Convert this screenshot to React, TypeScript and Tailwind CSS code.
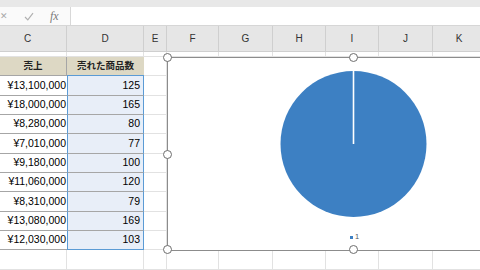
import React from "react";

const cols = [78, 77, 23, 52, 54, 53, 53, 54, 53];
const letters = ["C", "D", "E", "F", "G", "H", "I", "J", "K"];
const data: [string, string][] = [
  ["¥13,100,000", "125"],
  ["¥18,000,000", "165"],
  ["¥8,280,000", "80"],
  ["¥7,010,000", "77"],
  ["¥9,180,000", "100"],
  ["¥11,060,000", "120"],
  ["¥8,310,000", "79"],
  ["¥13,080,000", "169"],
  ["¥12,030,000", "103"],
];

const gridTpl = "grid grid-cols-[78px_77px_23px_52px_54px_53px_53px_54px_53px]";

function Handle({ cls }: { cls: string }) {
  return (
    <div
      className={`absolute w-[9px] h-[9px] rounded-full bg-white border-[1.5px] border-[#6e6e6e] ${cls}`}
    />
  );
}

export default function App() {
  return (
    <div
      className="relative w-[480px] h-[270px] overflow-hidden bg-white text-black"
      style={{ fontFamily: '"Liberation Sans", "Noto Sans CJK JP", sans-serif' }}
    >
      {/* formula bar */}
      <div className="h-[7px] bg-[#e8e8e8]" />
      <div className="h-[19px] flex bg-white border-b border-[#d6d6d6]">
        <div className="w-[70px] relative bg-[#fafafa] text-[#a8a8a8]">
          <span className="absolute left-[0px] top-[3px] text-[9px] leading-[12px]">✕</span>
          <svg className="absolute left-[24px] top-[5px]" width="10" height="9" viewBox="0 0 10 9">
            <path d="M1 5 L3.8 7.8 L9 1.2" fill="none" stroke="#b0b0b0" strokeWidth="1.2" />
          </svg>
          <span
            className="absolute left-[50px] top-[1px] text-[12px] italic text-[#7a7a7a] leading-[16px]"
            style={{ fontFamily: '"Liberation Serif", serif' }}
          >
            fx
          </span>
        </div>
        <div className="flex-1 border-l border-[#d8d8d8] bg-white" />
      </div>

      {/* column headers */}
      <div className={`${gridTpl} -ml-[11px] h-[26px] bg-[#e6e6e6] border-b border-[#cfcfcf]`}>
        {letters.map((l) => (
          <div
            key={l}
            className="border-r border-[#cfcfcf] flex items-center justify-center text-[10px] text-[#333]"
          >
            {l}
          </div>
        ))}
      </div>

      {/* body */}
      <div className="-ml-[11px]">
        <div className={`${gridTpl} h-[5px]`}>
          {cols.map((_, i) => (
            <div key={i} className="border-r border-b border-[#e2e2e2]" />
          ))}
        </div>
        <div className={`${gridTpl} h-[19.4px]`}>
          <div className="bg-[#ddd8c4] border-r border-[#a6a6a6] border-b border-b-[#a6a6a6] flex items-center justify-center text-[9.5px] font-bold text-[#222]">
            <span className="pl-[11px]">売上</span>
          </div>
          <div className="bg-[#ddd8c4] border-b border-b-[#5b9bd5] flex items-center justify-center text-[9.5px] font-bold text-[#222]">
            売れた商品数
          </div>
          {cols.slice(2).map((_, i) => (
            <div key={i} className="border-r border-b border-[#e2e2e2]" />
          ))}
        </div>
        {data.map(([a, b], r) => (
          <div key={r} className={`${gridTpl} h-[19.33px]`}>
            <div className="border-b border-[#a6a6a6] flex items-center justify-end pr-[1px] text-[10.5px]">
              {a}
            </div>
            <div
              className={`bg-[#e8eef8] border-l border-r border-[#5b9bd5] border-b ${
                r === data.length - 1 ? "border-b-[#5b9bd5]" : "border-b-[#a6a6a6]"
              } flex items-center justify-end pr-[3px] text-[10.5px]`}
            >
              {b}
            </div>
            {cols.slice(2).map((_, i) => (
              <div key={i} className="border-r border-b border-[#e2e2e2]" />
            ))}
          </div>
        ))}
        <div className={`${gridTpl} h-[19.33px]`}>
          {cols.map((_, i) => (
            <div key={i} className="border-r border-b border-[#e2e2e2]" />
          ))}
        </div>
      </div>

      {/* chart overlay */}
      <div className="absolute left-[167px] top-[57px] w-[372px] h-[194px] bg-white border-[1.5px] border-[#8c8c8c]">
        <svg className="absolute left-0 top-0" width="372" height="194">
          <circle cx="185.5" cy="86" r="73" fill="#3d80c3" />
          <line x1="185.5" y1="86" x2="185.5" y2="12.5" stroke="#ffffff" strokeWidth="1.6" />
        </svg>
        <div className="absolute left-[182px] top-[175px] flex items-center gap-[2px]">
          <div className="w-[3px] h-[3px] bg-[#3d80c3]" />
          <span className="text-[7.5px] leading-[8px] text-[#595959]">1</span>
        </div>
        <Handle cls="left-[-5.5px] top-[-5.5px]" />
        <Handle cls="left-[180.5px] top-[-5.5px]" />
        <Handle cls="left-[-5.5px] top-[91.5px]" />
        <Handle cls="left-[-5.5px] top-[187px]" />
        <Handle cls="left-[180.5px] top-[187px]" />
      </div>
    </div>
  );
}
